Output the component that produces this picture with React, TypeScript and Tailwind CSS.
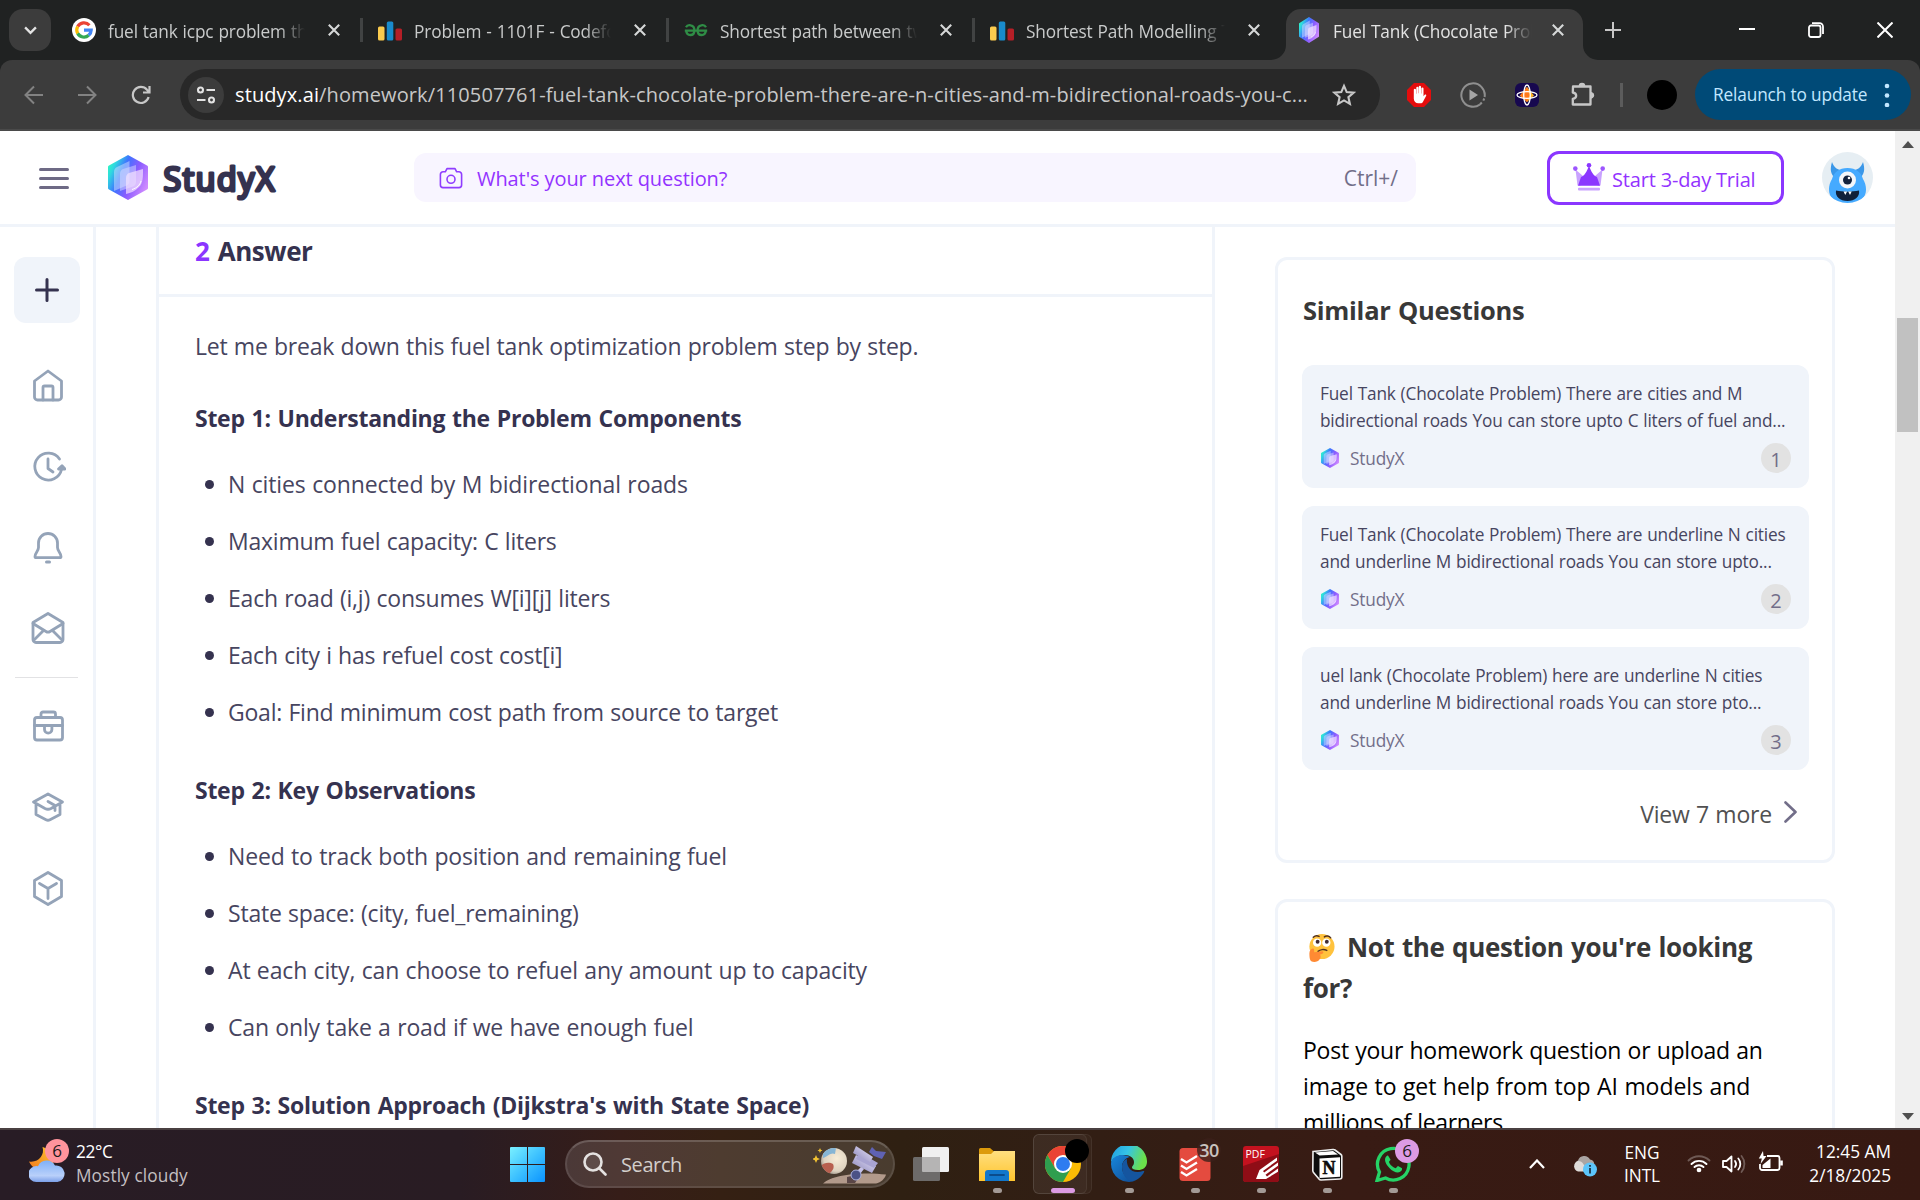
import type { ReactNode } from "react";

const G_RED = "#ea4335";

function GoogleIcon() {
  return (
    <svg viewBox="0 0 24 24" className="size-6 shrink-0">
      <circle cx="12" cy="12" r="12" fill="#fff" />
      <g fill="none" strokeWidth="3.2">
        <path d="M17.4 7.2A7.2 7.2 0 0 0 5.7 8.6" stroke={G_RED} />
        <path d="M5.7 8.5a7.2 7.2 0 0 0 0 7" stroke="#fbbc04" />
        <path d="M5.7 15.4a7.2 7.2 0 0 0 11 1.9" stroke="#34a853" />
        <path d="M12 12.1h7.2a7.2 7.2 0 0 1-2.5 5.2" stroke="#4285f4" />
      </g>
    </svg>
  );
}

function BarsIcon() {
  return (
    <svg viewBox="0 0 24 24" className="size-6 shrink-0">
      <rect x="0" y="8.5" width="6.5" height="14" rx="1.5" fill="#fbcb4e" />
      <rect x="8.8" y="3.5" width="6.5" height="19" rx="1.5" fill="#198bcc" />
      <rect x="17.5" y="10.5" width="6.5" height="12" rx="1.5" fill="#b51f27" />
    </svg>
  );
}

function GeeksIcon() {
  return (
    <svg viewBox="0 0 24 24" className="size-6 shrink-0" fill="none" stroke="#2f8d46" strokeWidth="2.3">
      <path d="M2 9.2C3 7.4 5 6.9 6.7 7.3c2.4.5 3.8 2.5 3.7 5.2M13.6 12.5c-.1-2.7 1.3-4.7 3.7-5.2 1.7-.4 3.7.1 4.7 1.9M.8 12.600h22.4M2.2 12.600c.2 2.700 1.900 4.400 4.200 4.400 2.300 0 3.900-1.700 4-4.400M13.600 12.600c.1 2.700 1.700 4.400 4 4.400 2.300 0 4-1.700 4.200-4.400" />
    </svg>
  );
}

function StudyXMark({ id, className }: { id: string; className: string }) {
  return (
    <svg viewBox="0 0 40 45" preserveAspectRatio="none" className={className}>
      <defs>
        <linearGradient id={id} x1="0" y1="0.25" x2="1" y2="0.75">
          <stop offset="0" stopColor="#2ff5c4" />
          <stop offset="0.12" stopColor="#2fd8e0" />
          <stop offset="0.34" stopColor="#3f74ff" />
          <stop offset="0.62" stopColor="#8b5cff" />
          <stop offset="1" stopColor="#d890ff" />
        </linearGradient>
      </defs>
      <path d="M20 0 39 10.500a2 2 0 0 1 1 2v20a2 2 0 0 1-1 2L20 45 1 34.500a2 2 0 0 1-1-2v-20a2 2 0 0 1 1-2Z" fill={`url(#${id})`} />
      <path d="M6 17c0-2.500 1-4 3-5L21.500 6v20c0 2-1 3.500-3 4.500L6 36Z" fill="#cfe6ff" opacity=".5" />
      <path d="M12 19c0-2.500 1-4 3-5l13-4v17c0 2-1 3.500-3 4.500L12 36Z" fill="#d9dcff" opacity=".5" />
      <path d="M18 23c0-2.500 1-4 3-5l14-4c0 8 0 14-4 18s-8 6-13 7Z" fill="#f3e2ff" opacity=".7" />
      <path d="M33 26c-1 4-4 7-9 8.500" fill="none" stroke="#fff" strokeWidth="1" opacity=".9" />
    </svg>
  );
}

function CloseX() {
  return (
    <svg viewBox="0 0 12 12" className="size-3 shrink-0" fill="none" stroke="#d6d8d8" strokeWidth="2.1">
      <path d="M.8.8l10.4 10.4M11.2.8.8 11.2" />
    </svg>
  );
}

function TabTitle({ children }: { children: string }) {
  return (
    <span className="ml-3 mt-[3px] w-[201px] overflow-hidden whitespace-nowrap text-[17.25px] leading-[24px] tracking-[-0.14px] [word-spacing:0.6px] [mask-image:linear-gradient(to_right,#000_86%,transparent_99%)]">
      {children}
    </span>
  );
}

const inactiveTabs = [
  { icon: <GoogleIcon />, title: "fuel tank icpc problem the" },
  { icon: <BarsIcon />, title: "Problem - 1101F - Codefor" },
  { icon: <GeeksIcon />, title: "Shortest path between tw" },
  { icon: <BarsIcon />, title: "Shortest Path Modelling T" },
];

function TabStrip() {
  return (
    <div className="flex h-[60px] bg-[#202222] pl-[9px] text-[#c9cbcb]">
      <div className="mt-[9px] flex size-[42px] items-center justify-center rounded-[14px] bg-[#3c3c3c]">
        <svg viewBox="0 0 14 10" className="h-[9px] w-[13px]" fill="none" stroke="#e3e3e3" strokeWidth="2.6">
          <path d="m1 1.500 6 6 6-6" />
        </svg>
      </div>
      <div className="ml-[6px] flex">
        {inactiveTabs.map((t, i) => (
          <div key={t.title} className="flex h-[60px] w-[306px] items-center pl-[15px]">
            {t.icon}
            <TabTitle>{t.title}</TabTitle>
            <span className="ml-[21px]">
              <CloseX />
            </span>
            <span className={i < 3 ? "ml-5 h-6 w-[3px] bg-[#414343]" : "hidden"} />
          </div>
        ))}
      </div>
      <div className="relative ml-[5px] mt-[9px] flex h-[51px] w-[297px] items-center rounded-t-[15px] bg-[#3c3c3c] pb-[9px] pl-[13px] text-[#e3e3e3]">
        <svg viewBox="0 0 15 15" className="absolute -left-[15px] bottom-0 size-[15px]">
          <path d="M15 0v15H0A15 15 0 0 0 15 0Z" fill="#3c3c3c" />
        </svg>
        <svg viewBox="0 0 15 15" className="absolute -right-[15px] bottom-0 size-[15px]">
          <path d="M0 0v15h15A15 15 0 0 1 0 0Z" fill="#3c3c3c" />
        </svg>
        <span className="w-[22px]">
          <StudyXMark id="tabmark" className="h-[26px] w-[20px]" />
        </span>
        <TabTitle>Fuel Tank (Chocolate Prob</TabTitle>
        <span className="ml-[18px]">
          <CloseX />
        </span>
      </div>
      <svg viewBox="0 0 16 16" className="ml-[22px] mt-[22px] size-4" fill="none" stroke="#c7c7c7" strokeWidth="2">
        <path d="M8 0v16M0 8h16" />
      </svg>
      <svg viewBox="0 0 16 16" className="ml-[118px] mt-[21px] size-4" stroke="#fff" strokeWidth="2">
        <path d="M0 8h16" />
      </svg>
      <svg viewBox="0 0 16 16" className="ml-[53px] mt-[22px] size-4" fill="none" stroke="#fff" strokeWidth="1.8">
        <rect x="1" y="3.500" width="11.500" height="11.500" rx="2" />
        <path d="M4 1.200h7.500a3.500 3.500 0 0 1 3.500 3.500V12" />
      </svg>
      <svg viewBox="0 0 16 16" className="ml-[53px] mt-[22px] size-4" stroke="#fff" strokeWidth="2">
        <path d="m.5.5 15 15M15.500.5l-15 15" />
      </svg>
    </div>
  );
}

function Toolbar() {
  return (
    <div className="bg-[#202222]">
      <div className="flex h-[71px] rounded-t-[12px] border-b-2 border-[#4a4a4a] bg-[#3c3c3c] pl-6 pt-[9px]">
        <div className="flex h-[51px] items-center">
          <svg viewBox="0 0 20 20" className="size-5" fill="none" stroke="#828282" strokeWidth="2">
            <path d="M19 10H2M10 1.500 1.500 10l8.500 8.500" />
          </svg>
          <svg viewBox="0 0 20 20" className="ml-[33px] size-5" fill="none" stroke="#828282" strokeWidth="2">
            <path d="M1 10h17M10 1.500l8.500 8.500-8.500 8.500" />
          </svg>
          <svg viewBox="0 0 20 20" className="ml-[34px] size-5" fill="none" stroke="#c7c7c7" strokeWidth="2.2">
            <path d="M17.600 12A8 8 0 1 1 16 4.800L18 7M18.500 1v6.500H12" />
          </svg>
        </div>
        <div className="ml-[29px] flex h-[51px] w-[1200px] items-center rounded-full bg-[#282828] pl-2">
          <div className="flex size-9 items-center justify-center rounded-full bg-[#3c3c3c]">
            <svg viewBox="0 0 20 20" className="size-5" fill="none" stroke="#e3e3e3" strokeWidth="2.1">
              <circle cx="4.500" cy="5" r="2.500" />
              <path d="M10.500 5H19M1 15h8.500" />
              <circle cx="15.500" cy="15" r="2.500" />
            </svg>
          </div>
          <span className="ml-[11px] w-[1085px] whitespace-nowrap text-[20px] tracking-[0.115px] text-[#c7c7c7]">
            <span className="text-white">studyx.ai</span>
            /homework/110507761-fuel-tank-chocolate-problem-there-are-n-cities-and-m-bidirectional-roads-you-c...
          </span>
          <svg viewBox="0 0 24 24" className="ml-3 size-6" fill="none" stroke="#c7c7c7" strokeWidth="2.1">
            <path d="m12 2.800 2.700 6.300 6.800.6-5.100 4.500 1.500 6.700-5.900-3.500-5.900 3.500 1.500-6.700-5.100-4.500 6.800-.6Z" />
          </svg>
        </div>
        <div className="ml-[27px] flex h-[51px] items-center">
          <svg viewBox="0 0 24 24" className="size-6">
            <path d="M7 0h10l7 7v10l-7 7H7l-7-7V7Z" fill="#e40d0d" />
            <path d="M6.800 12.500V6.800a1.100 1.100 0 0 1 2.200 0v4h.3V4.800a1.100 1.100 0 0 1 2.200 0v5.500h.3V3.800a1.100 1.100 0 0 1 2.200 0v6.700h.3V5.500a1.100 1.100 0 0 1 2.200 0v7.700l1.200-1.400c.8-.7 1.900 0 1.500.9l-3.200 6c-.5 1-1.400 1.600-2.500 1.600h-2.200c-2.500 0-4.500-2-4.500-4.500Z" fill="#fff" />
          </svg>
          <svg viewBox="0 0 26 26" className="ml-[29px] size-[26px]" fill="none" stroke="#8f8f8f" strokeWidth="2">
            <path d="M20 22.500A11.700 11.700 0 1 1 24.600 15" />
            <path d="m20 22.500 1.800-2M24.300 16.500l-1 2.200" />
            <path d="M9.500 7.500v11l8.500-5.500Z" fill="#a5a5a5" stroke="none" />
          </svg>
          <svg viewBox="0 0 24 24" className="ml-[29px] size-6">
            <rect width="24" height="24" rx="6" fill="#17084f" />
            <path d="m12 4 7 8.500L12 19l-7-6.500Z" fill="#ffb020" />
            <path d="m12 4 3 8-3 7-7-6.500Z" fill="#ff7a1a" />
            <g fill="none" stroke="#fff" strokeWidth="1.3">
              <ellipse cx="12" cy="12" rx="10" ry="3.300" />
              <ellipse cx="12" cy="12" rx="3.300" ry="10" />
            </g>
          </svg>
          <svg viewBox="0 0 26 26" className="ml-[31px] size-[26px]" fill="none" stroke="#c7c7c7" strokeWidth="2.3" strokeLinejoin="round">
            <path d="M3 4.500h17.500v18H2.800v-5.600c4.500-.8 4.500-5.600 0-6.400Z" />
            <path d="M9.300 4a2.700 2.700 0 0 1 5.400 0ZM21.500 10.500a2.900 2.900 0 0 1 0 5.600Z" fill="#c7c7c7" strokeWidth="1.2" />
          </svg>
          <span className="ml-[24px] h-6 w-[3px] bg-[#5c5c5c]" />
          <span className="ml-[24px] size-[30px] rounded-full bg-black" />
        </div>
        <div className="ml-[18px] flex h-[51px] w-[216px] items-center rounded-full bg-[#004a77] pl-[18px] text-[17.25px] tracking-[-0.14px] text-[#c2e7ff]">
          <span className="mt-px w-[171px] whitespace-nowrap">Relaunch to update</span>
          <svg viewBox="0 0 6 24" className="h-6 w-[6px]" fill="#c2e7ff">
            <circle cx="3" cy="3" r="2.300" />
            <circle cx="3" cy="12.500" r="2.300" />
            <circle cx="3" cy="22" r="2.300" />
          </svg>
        </div>
      </div>
    </div>
  );
}

function SiteHeader() {
  return (
    <header className="flex h-[96px] items-center border-b-[3px] border-[#f0f4fa] pl-[39px]">
      <div className="mt-px flex w-[30px] flex-col gap-[6px]">
        <span className="h-[3px] rounded bg-[#6e6a85]" />
        <span className="h-[3px] rounded bg-[#6e6a85]" />
        <span className="h-[3px] rounded bg-[#6e6a85]" />
      </div>
      <StudyXMark id="mainmark" className="ml-[39px] h-[45px] w-[40px]" />
      <svg viewBox="0 0 266 50" className="h-[50px] w-[266px]">
        <text
          x="15.500"
          y="37.500"
          fontSize="32"
          fontWeight="400"
          textLength="111"
          fill="#35324f"
          stroke="#35324f"
          strokeWidth="3.200"
          strokeLinejoin="round"
          strokeLinecap="round"
        >
          StudyX
        </text>
      </svg>
      <div className="flex h-[49px] w-[1002px] items-center rounded-[12px] bg-[#f8f5ff] pl-[25px] pr-[18px]">
        <svg viewBox="0 0 24 24" className="size-6" fill="none" stroke="#8f3dff" strokeWidth="1.6" strokeLinejoin="round">
          <path d="M8 2.600h8l1.700 3.200H20a2.600 2.600 0 0 1 2.600 2.600V19a2.600 2.600 0 0 1-2.600 2.600H4A2.600 2.600 0 0 1 1.400 19V8.400A2.600 2.600 0 0 1 4 5.800h2.300Z" />
          <circle cx="12" cy="13.300" r="4" />
        </svg>
        <span className="ml-[14px] mt-[3px] grow text-[20px] tracking-[-0.08px] text-[#9333ff]">What's your next question?</span>
        <span className="mt-[3px] text-[21px] text-[#726e89]">Ctrl+/</span>
      </div>
      <div className="ml-[131px] flex h-[54px] w-[237px] items-center rounded-[12px] border-[3px] border-[#8b36ff] pl-[23px]">
        <svg viewBox="0 0 32 28" className="-mt-px h-[28px] w-[32px]">
          <g fill="#c9a2ff">
            <path d="M2.500 6.500 10 13l-2.500 9.500h-3ZM29.500 6.500 22 13l2.500 9.500h3Z" />
            <rect x="5" y="24.800" width="22" height="2.700" rx="1" />
          </g>
          <path d="M16 2.500c2 6 5 11 8 11.500l3 8.800H5L8 14c3-.5 6-5.500 8-11.500Z" fill="#8b36ff" />
          <circle cx="16" cy="2.300" r="2.300" fill="#8b36ff" />
          <circle cx="2.300" cy="5.600" r="2.300" fill="#9d55ff" />
          <circle cx="29.700" cy="5.600" r="2.300" fill="#9d55ff" />
        </svg>
        <span className="ml-[7px] mt-1 whitespace-nowrap text-[20px] tracking-[-0.18px] text-[#9333ff]">Start 3-day Trial</span>
      </div>
      <svg viewBox="0 0 51 51" className="ml-[38px] size-[51px]">
        <defs>
          <clipPath id="avatarclip">
            <circle cx="25.500" cy="25.500" r="25.500" />
          </clipPath>
        </defs>
        <g clipPath="url(#avatarclip)">
          <rect width="51" height="51" fill="#e6eef3" />
          <path d="M10 10c-2 7-2 12 4 17l8-8c-6-1-10-3-12-9ZM41 10c2 7 2 12-4 17l-8-8c6-1 10-3 12-9Z" fill="#3a97e8" />
          <path d="M25.500 16C34 16 39 20 41 27c3 5 4 11 2 16-2 5-8 9-17.500 9S10 48 8 43c-2-5-1-11 2-16 2-7 7-11 15.500-11Z" fill="#45aaff" />
          <circle cx="25.500" cy="28" r="8.500" fill="#f4f7fa" />
          <circle cx="25.500" cy="28" r="4.500" fill="#13233f" />
          <circle cx="27" cy="26" r="1.300" fill="#fff" />
          <path d="M14 38.500c7 1.500 16 1.500 23 0 1 6-4 10.500-11.500 10.500S13 44.500 14 38.500Z" fill="#10203a" />
          <path d="m21.500 39.500 1.800 3.500 1.800-3.400ZM26.200 39.600 28 43l1.700-3.500Z" fill="#fff" />
        </g>
      </svg>
    </header>
  );
}

function SideIcon({ children }: { children: ReactNode }) {
  return (
    <svg viewBox="0 0 36 36" className="ml-[30px] size-9 shrink-0" fill="none" stroke="#94a3b8" strokeWidth="2.8" strokeLinecap="round" strokeLinejoin="round">
      {children}
    </svg>
  );
}

function Sidebar() {
  return (
    <nav className="flex w-[96px] shrink-0 flex-col border-r-[3px] border-[#f0f4fa] pt-[30px]">
      <div className="ml-[14px] flex size-[66px] shrink-0 items-center justify-center rounded-[12px] bg-[#f0f4fa]">
        <svg viewBox="0 0 24 24" className="size-6" stroke="#35324f" strokeWidth="3" strokeLinecap="round">
          <path d="M12 1.500v21M1.500 12h21" />
        </svg>
      </div>
      <div className="mt-[45px] flex flex-col gap-[45px]">
        <SideIcon>
          <path d="M18 3 4.500 13v16A3 3 0 0 0 7.500 32h21a3 3 0 0 0 3-3V13Z" />
          <path d="M13 32V19.500A1.500 1.500 0 0 1 14.500 18h7a1.500 1.500 0 0 1 1.500 1.500V32" />
        </SideIcon>
        <SideIcon>
          <path d="M29.500 10A13.500 13.500 0 1 0 31.500 20.500M18 10v9.500l5 3.500" />
          <path d="m28.500 20 3.500-3.300 3 3.300Z" fill="#94a3b8" />
        </SideIcon>
        <SideIcon>
          <path d="M18 3.500a9.500 9.500 0 0 0-9.500 9.500v4.500c0 3.500-3.500 5.500-3.500 9 0 .8.500 1.200 1.200 1.200h23.600c.7 0 1.200-.4 1.200-1.200 0-3.500-3.500-5.500-3.500-9V13A9.500 9.500 0 0 0 18 3.500Z" />
          <path d="M16.500 32h3" strokeWidth="3" />
        </SideIcon>
        <SideIcon>
          <path d="M18 2.500 3 11.500v17a3 3 0 0 0 3 3h24a3 3 0 0 0 3-3v-17Z" />
          <path d="m3 12.500 13 8c1.300.8 2.700.8 4 0l13-8M4 29l9-9M32 29l-9-9" />
        </SideIcon>
      </div>
      <div className="mb-[30px] ml-[15px] mt-[30px] h-px w-[63px] shrink-0 bg-[#e2e2e4]" />
      <div className="flex flex-col gap-[45px]">
        <SideIcon>
          <rect x="4.500" y="9.500" width="28" height="22.500" rx="2.500" />
          <path d="M11 9.500V6a2 2 0 0 1 2-2h10.500a2 2 0 0 1 2 2v3.500M4.500 17.500h28M14.500 17.500v4a3.700 3.700 0 0 0 7.400 0v-4" />
        </SideIcon>
        <SideIcon>
          <path d="M18 5 3.500 13l11.500 6.500c2 1 4 1 6 0L32.500 13ZM6 15v10.500l10 5.200c1.300.7 2.700.7 4 0L30 25.500V15.500M18 12.500l7 4v5" />
        </SideIcon>
        <SideIcon>
          <path d="M18 2.500 4.500 10.500v16l13.500 8 13.500-8v-16ZM9.500 13.500l8.500 5 8.500-5M18 18.500v10" />
        </SideIcon>
      </div>
    </nav>
  );
}

function StepTitle({ children }: { children: ReactNode }) {
  return (
    <h3 className="text-[23px] leading-[36px] font-bold tracking-[-0.28px] text-[#35324f] [word-spacing:1.2px]">{children}</h3>
  );
}

type Line = { text: string; fit: string };

function Bullets({ items }: { items: Line[] }) {
  return (
    <ul className="mt-[30px] flex flex-col gap-[21px]">
      {items.map(({ text, fit }) => (
        <li key={text} className="flex items-center pl-[10px]">
          <span className="mt-px size-[9px] rounded-full bg-[#35324f]" />
          <span className={`ml-[14px] text-[23px] leading-[36px] whitespace-nowrap ${fit}`}>{text}</span>
        </li>
      ))}
    </ul>
  );
}

const components: Line[] = [
  { text: "N cities connected by M bidirectional roads", fit: "tracking-[-0.11px]" },
  { text: "Maximum fuel capacity: C liters", fit: "tracking-[-0.23px]" },
  { text: "Each road (i,j) consumes W[i][j] liters", fit: "tracking-[-0.2px]" },
  { text: "Each city i has refuel cost cost[i]", fit: "tracking-[-0.22px]" },
  { text: "Goal: Find minimum cost path from source to target", fit: "tracking-[-0.22px]" },
];

const observations: Line[] = [
  { text: "Need to track both position and remaining fuel", fit: "tracking-[-0.15px]" },
  { text: "State space: (city, fuel_remaining)", fit: "tracking-[-0.2px]" },
  { text: "At each city, can choose to refuel any amount up to capacity", fit: "tracking-[-0.15px]" },
  { text: "Can only take a road if we have enough fuel", fit: "tracking-[-0.16px]" },
];

function Answer() {
  return (
    <article className="h-[901px] w-[1059px] shrink-0 overflow-hidden border-x-[3px] border-[#f0f4fa] text-[#474560] [word-spacing:0.6px]">
      <div className="h-[70px] border-b-[3px] border-[#f0f4fa] pl-9 pt-[6px] text-[26px] leading-[36px] font-bold tracking-[-0.45px] text-[#35324f] [word-spacing:2px]">
        <span className="text-[#8b36ff]">2</span> Answer
      </div>
      <div className="pl-9 pt-[31px]">
        <p className="mb-9 text-[23px] leading-[36px] tracking-[-0.21px]">
          Let me break down this fuel tank optimization problem step by step.
        </p>
        <StepTitle>Step 1: Understanding the Problem Components</StepTitle>
        <Bullets items={components} />
        <div className="h-[42px]" />
        <StepTitle>Step 2: Key Observations</StepTitle>
        <Bullets items={observations} />
        <div className="h-[42px]" />
        <StepTitle>Step 3: Solution Approach (Dijkstra's with State Space)</StepTitle>
      </div>
    </article>
  );
}

const similar = [
  ["Fuel Tank (Chocolate Problem) There are cities and M", "bidirectional roads You can store upto C liters of fuel and..."],
  ["Fuel Tank (Chocolate Problem) There are underline N cities", "and underline M bidirectional roads You can store upto..."],
  ["uel lank (Chocolate Problem) here are underline N cities", "and underline M bidirectional roads You can store pto..."],
];

function Aside() {
  return (
    <aside className="ml-[60px] flex w-[560px] shrink-0 flex-col gap-9 pt-[30px]">
      <section className="h-[606px] shrink-0 rounded-[12px] border-[3px] border-[#f0f4fa] pl-[25px] pr-[23px] pt-[30px]">
        <h2 className="text-[25.5px] leading-[40px] font-bold tracking-[-0.26px] text-[#383838] [word-spacing:1px]">Similar Questions</h2>
        <div className="-ml-px mt-[35px] flex flex-col gap-[18px]">
          {similar.map(([a, b], i) => (
            <div
              key={a}
              className="h-[123px] rounded-[12px] bg-[#f0f4fa] px-[18px] pt-[15px] text-[17.25px] leading-[27px] tracking-[-0.18px] text-[#474560] [word-spacing:0.6px]"
            >
              <p className="whitespace-nowrap">{a}</p>
              <p className="whitespace-nowrap">{b}</p>
              <div className="mt-[9px] flex h-[30px] items-center">
                <StudyXMark id={`card${i}`} className="ml-px h-[20px] w-[18px]" />
                <span className="ml-[11px] grow text-[#726e89]">StudyX</span>
                <span className="flex size-[30px] items-center justify-center rounded-full bg-[#e2e2e2] pt-[2px] text-[20px] text-[#726e89]">
                  {i + 1}
                </span>
              </div>
            </div>
          ))}
        </div>
        <div className="mt-[26px] flex h-9 items-center justify-end pr-3">
          <span className="text-[23px] tracking-[-0.2px] text-[#515151] [word-spacing:0.6px]">View 7 more</span>
          <svg viewBox="0 0 13 22" className="-mt-[5px] ml-3 h-[22px] w-[13px]" fill="none" stroke="#726e89" strokeWidth="2.6" strokeLinecap="round" strokeLinejoin="round">
            <path d="m1.500 1.500 10 9.500-10 9.500" />
          </svg>
        </div>
      </section>
      <section className="h-[300px] shrink-0 rounded-[12px] border-[3px] border-[#f0f4fa] px-[25px] pt-[25px]">
        <h2 className="text-[26px] leading-[40.5px] font-bold tracking-[-0.34px] text-[#383838] [word-spacing:1px]">
          <span className="flex">
            <svg viewBox="0 0 28 30" className="ml-1 mr-3 mt-[6px] h-[29px] w-[28px] shrink-0">
              <circle cx="15" cy="14" r="13" fill="#ffc23d" />
              <circle cx="10" cy="10" r="4.300" fill="#fff" />
              <circle cx="19.500" cy="10" r="4.300" fill="#fff" />
              <circle cx="10.500" cy="9" r="2" fill="#402a32" />
              <circle cx="20" cy="9" r="2" fill="#402a32" />
              <path d="M6 4.500C8 2.500 10 2.500 12 3.500M17.500 4c2-1.500 5-1 6.500 1M11 19c2-2 6-2.500 9-1" fill="none" stroke="#503020" strokeWidth="1.5" strokeLinecap="round" />
              <path d="M2 21c0-3 2-5 4-5 1 0 1 3 1 4l8-1c2 0 2 2 0 2.600l-2 .6c2 3-1 7.800-6 7.800-4 0-5-2-5-9Z" fill="#ff8a33" />
            </svg>
            <span className="whitespace-nowrap">Not the question you're looking</span>
          </span>
          for?
        </h2>
        <p className="mt-[24px] text-[23px] leading-[36px] whitespace-nowrap text-black [word-spacing:0.6px]">
          <span className="block tracking-[-0.24px]">Post your homework question or upload an</span>
          <span className="block tracking-[-0.06px]">image to get help from top AI models and</span>
          <span className="block tracking-[-0.33px]">millions of learners.</span>
        </p>
      </section>
    </aside>
  );
}

function Scrollbar() {
  return (
    <div className="flex w-[25px] shrink-0 flex-col items-center bg-[#f0f0f0] pt-[10px]">
      <svg viewBox="0 0 12 7" className="h-[7px] w-3" fill="#505050">
        <path d="M6 0l6 7H0Z" />
      </svg>
      <div className="mt-[170px] h-[114px] w-[21px] bg-[#c1c1c1]" />
      <svg viewBox="0 0 12 7" className="mt-[681px] h-[7px] w-3" fill="#505050">
        <path d="M6 7 0 0h12Z" />
      </svg>
    </div>
  );
}

function TaskItem({ children, running = true }: { children: ReactNode; running?: boolean }) {
  return (
    <div className="relative flex h-[70px] w-[66px] shrink-0 flex-col items-center pt-4">
      {children}
      {running && <span className="mt-[6px] h-[5px] w-[9px] rounded-full bg-[#a39a96]" />}
    </div>
  );
}

function Badge6({ className }: { className: string }) {
  return (
    <span className={`flex size-6 items-center justify-center rounded-full text-[17px] leading-[24px] text-[#1b1b1b] ${className}`}>6</span>
  );
}

function Taskbar() {
  return (
    <footer className="flex h-[72px] shrink-0 border-t-2 border-[#4a4041] bg-[linear-gradient(90deg,#281c25_0px,#291c23_460px,#361d18_620px,#352013_720px,#2f2012_900px,#321e14_1100px,#381b14_1350px,#371912_1920px)] text-white">
      <div className="relative ml-[29px] mt-[17px] h-[36px] w-[37px]">
        <svg viewBox="0 0 37 36" className="h-9 w-[37px]">
          <defs>
            <linearGradient id="wcloud" x1="0" y1="0" x2="0" y2="1">
              <stop offset="0" stopColor="#7fb0f7" />
              <stop offset=".7" stopColor="#b9d0fa" />
              <stop offset="1" stopColor="#7b9fe8" />
            </linearGradient>
            <linearGradient id="wmoon" x1="1" y1="0" x2="0" y2="1">
              <stop offset="0" stopColor="#ffc52e" />
              <stop offset="1" stopColor="#f0761b" />
            </linearGradient>
          </defs>
          <path d="M13.500 0c2.500 8-4 16-13.500 14.500 4 9 16 12 22 8 6-8 0-20-8.500-22.500Z" fill="url(#wmoon)" />
          <path d="M8 35a8 8 0 1 1 1-15.800A9.500 9.500 0 0 1 26 18.500 8.300 8.300 0 0 1 28.500 35Z" fill="url(#wcloud)" />
        </svg>
        <Badge6 className="absolute -top-[8px] left-[16px] bg-[#ff949c]" />
      </div>
      <div className="ml-[10px] mt-[10px] w-[434px] text-[17.25px] leading-[24px]">
        <div className="tracking-[-0.4px]">22°C</div>
        <div className="tracking-[0.1px] text-[#c3bfc1]">Mostly cloudy</div>
      </div>
      <svg viewBox="0 0 35 35" className="mt-[17px] size-[35px] shrink-0">
        <defs>
          <linearGradient id="win" x1="0" y1="0" x2="1" y2="1">
            <stop offset="0" stopColor="#7af0ff" />
            <stop offset=".5" stopColor="#3ec2ff" />
            <stop offset="1" stopColor="#0a93ff" />
          </linearGradient>
        </defs>
        <path d="M1 0h16v17H0V1a1 1 0 0 1 1-1ZM18 0h16a1 1 0 0 1 1 1v16H18ZM0 18h17v17H1a1 1 0 0 1-1-1ZM18 18h17v16a1 1 0 0 1-1 1H18Z" fill="url(#win)" />
      </svg>
      <div className="ml-5 mt-[10px] flex h-12 w-[330px] shrink-0 items-center rounded-full border-2 border-[#ffffff18] border-t-[#ffffff2c] bg-[#ffffff20] pl-4">
        <svg viewBox="0 0 24 24" className="size-6" fill="#ffffff18" stroke="#e4e1e0" strokeWidth="2.6" strokeLinecap="round">
          <circle cx="10" cy="10" r="8.500" />
          <path d="m16.500 16.500 6 6" />
        </svg>
        <span className="ml-[14px] mt-px w-[192px] text-[20px] tracking-[-0.4px] text-[#d3cecb]">Search</span>
        <svg viewBox="0 0 74 40" className="h-10 w-[74px]">
          <defs>
            <radialGradient id="planet" cx=".6" cy=".4" r=".7">
              <stop offset="0" stopColor="#f7ecd6" />
              <stop offset=".7" stopColor="#ded2bf" />
              <stop offset="1" stopColor="#8d857c" />
            </radialGradient>
            <clipPath id="pc">
              <circle cx="21" cy="17" r="13" />
            </clipPath>
            <linearGradient id="tube" x1="0" y1="1" x2="1" y2="0">
              <stop offset="0" stopColor="#8580b5" />
              <stop offset="1" stopColor="#eeeaff" />
            </linearGradient>
          </defs>
          <path d="m3 11 1.200 2.800L7 15l-2.800 1.200L3 19l-1.200-2.800L-1 15l2.800-1.200ZM7 4l.8 1.700L9.500 6.500l-1.700.8L7 9l-.8-1.700-1.700-.8 1.700-.8Z" fill="#f1c232" />
          <circle cx="21" cy="17" r="13" fill="url(#planet)" />
          <g clipPath="url(#pc)">
            <path d="M10 8c4-5 10-5 13-4l-1 6c-4-2-7 2-12 4Z" fill="#86b5d4" />
            <path d="M8 22c3-4 9-4 12-2 2 4-1 8-5 10Z" fill="#b8604f" />
          </g>
          <path d="M10 39.500c8-9 40-12 63-9-1 4-5 8-10 9Z" fill="#b29a8b" />
          <path d="M34 33 48 30l-6 9h-8Z" fill="#5b4747" />
          <path d="m56 8 3-5 4 4 10 1-4 7-8-3Z" fill="#5f62b4" />
          <path d="m43 11 20 11-4 7-20-10Z" fill="url(#tube)" />
          <path d="m46 8 19 11-4 5-18-9Z" fill="#a9a4d2" />
          <path d="m43 2 17 11-3 5-17-9Z" fill="url(#tube)" />
          <path d="m48 23 3 2-4 5-4-2Z" fill="#c7c2e8" />
          <circle cx="43" cy="31" r="5" fill="#4b5286" stroke="#aeb4e0" strokeWidth="1" />
        </svg>
      </div>
      <div className="ml-[3px] flex">
        <TaskItem running={false}>
          <svg viewBox="0 0 36 36" className="size-9">
            <rect x="9" y="1" width="27" height="25" rx="1.500" fill="#f0f0f0" />
            <rect x="0" y="11" width="27" height="24" rx="1.500" fill="#6d6b6a" />
            <path d="M9 11h18v15H10a1 1 0 0 1-1-1Z" fill="#b5b4b4" />
          </svg>
        </TaskItem>
        <TaskItem>
          <svg viewBox="0 0 36 36" className="size-9">
            <defs>
              <linearGradient id="fold" x1="0" y1="0" x2="0" y2="1">
                <stop offset="0" stopColor="#ffdf80" />
                <stop offset="1" stopColor="#ffc52e" />
              </linearGradient>
            </defs>
            <path d="M0 3.500A1.500 1.500 0 0 1 1.500 2H11l4 3.500h19.500A1.500 1.500 0 0 1 36 7v6H0Z" fill="#dc9a0b" />
            <path d="M0 8h12l3-3h21v30H0Z" fill="url(#fold)" />
            <path d="M6 35V27a3 3 0 0 1 3-3h18a3 3 0 0 1 3 3v8Z" fill="#1277cb" />
            <path d="M11 29h14" stroke="#0b4c8c" strokeWidth="1.8" strokeLinecap="round" />
          </svg>
        </TaskItem>
        <div className="relative flex h-[70px] w-[66px] shrink-0 flex-col items-center">
          <span className="absolute left-[3px] top-[4px] h-[60px] w-[59px] rounded-[6px] border border-[#ffffff10] bg-[#ffffff08]" />
          <span className="absolute left-[3px] top-[4px] h-[60px] w-[54px] rounded-[6px] border border-[#ffffff10] bg-[#ffffff08]" />
          <svg viewBox="0 0 36 36" className="relative mt-4 size-9">
            <circle cx="18" cy="18" r="18" fill="#fbbc05" />
            <path d="M2.410 9A18 18 0 0 1 33.590 9H18l-7.800 13.500Z" fill="#ea4335" />
            <path d="M2.410 9A18 18 0 0 0 18 36l7.800-13.500-15.600 0Z" fill="#2f9e4f" />
            <circle cx="18" cy="18" r="9" fill="#fff" />
            <circle cx="18" cy="18" r="7" fill="#2f7cf0" />
          </svg>
          <span className="absolute left-[35px] top-[9px] size-6 rounded-full bg-black" />
          <span className="relative mt-[6px] h-[5px] w-6 rounded-full bg-[#dc9be4]" />
        </div>
        <TaskItem>
          <svg viewBox="0 0 36 36" className="size-9">
            <defs>
              <linearGradient id="ed1" x1="0" y1="0" x2="1" y2=".3">
                <stop offset="0" stopColor="#1f9be0" />
                <stop offset=".5" stopColor="#35c4e6" />
                <stop offset="1" stopColor="#6be04a" />
              </linearGradient>
              <linearGradient id="ed2" x1="0" y1="0" x2="1" y2="1">
                <stop offset="0" stopColor="#1787dc" />
                <stop offset="1" stopColor="#114a92" />
              </linearGradient>
            </defs>
            <path d="M0 17A18 18 0 0 1 36 15c.3 6-4 9-9 9-4 0-6-1-6-2.500s2-2 2-5.500c0-4-4-7-9-7C7 9 1 12 0 17Z" fill="url(#ed1)" />
            <path d="M0 18c0-5 5-9 11-9 3 0 6 1 8 2-5 1-8 5-8 10 0 7 6 14 14 13.500A18 18 0 0 1 0 18Z" fill="url(#ed2)" />
            <path d="M11 21c0-4 2-7 5-8-1 8 5 16 16 12 1-.4 1.700.3 1 1.300C31 30 27 34.500 21 35.200 15 34 11 28 11 21Z" fill="#15559f" />
          </svg>
        </TaskItem>
        <TaskItem>
          <svg viewBox="0 0 36 36" className="size-9">
            <rect x="2.500" y="2" width="31" height="33" rx="3.500" fill="#e44b3f" />
            <path d="m4 13 5.500 3.500L20 10M4 19.500l5.500 3.500L20 16.500M4 26l5.500 3.500L20 23" fill="none" stroke="#fff" strokeWidth="2.3" />
          </svg>
          <span className="absolute left-[35px] top-[8px] flex size-6 items-center justify-center rounded-full bg-[#3b201acc] text-[18px] font-semibold tracking-[-0.5px] text-[#c9c2bf]">
            30
          </span>
        </TaskItem>
        <TaskItem>
          <svg viewBox="0 0 36 36" className="size-9">
            <rect width="36" height="36" rx="3" fill="#c4121f" />
            <path d="M0 20 36 8v25a3 3 0 0 1-3 3H3a3 3 0 0 1-3-3Z" fill="#8f0d16" />
            <text x="2.500" y="11.500" fontSize="10.500" fill="#fff" fontFamily="Open Sans">
              PDF
            </text>
            <path d="m13 33 3.500-9L34 11.500v3.200L20 25l1.200 1.500L35 16.500v3.200l-12.500 9L24 30.500l11-8v3.300l-12 7.200Z" fill="#fff" />
          </svg>
        </TaskItem>
        <TaskItem>
          <svg viewBox="0 0 36 36" className="size-9">
            <path d="M4 5.500 24 3.500a3 3 0 0 1 2 .5l6 4.500a2 2 0 0 1 .8 1.600V31a2 2 0 0 1-2 2L12 34a2.500 2.500 0 0 1-2-1L4.500 26.500a3 3 0 0 1-.7-2Z" fill="#0d0d0d" stroke="#eee" strokeWidth="1.6" />
            <path d="m6 6.500 18-1.500 5 3.500-18.500 1Z" fill="#fff" />
            <path d="M10.500 12.500 31 11.300v19.500l-20.500 1.300Z" fill="#fff" />
            <text x="13.500" y="28" fontSize="18" fontWeight="bold" fill="#0d0d0d" fontFamily="Liberation Serif" stroke="#0d0d0d" strokeWidth=".6">
              N
            </text>
          </svg>
        </TaskItem>
        <TaskItem>
          <svg viewBox="0 0 36 36" className="size-9" fill="none">
            <path d="M2 34.500 4.500 26A15.800 15.800 0 1 1 10.500 32Z" stroke="#25d366" strokeWidth="3.3" />
            <path d="M13 9.500c-1-.2-3 1.500-3 4.200C10 19 18 26.800 23 26.500c2.500-.2 4.500-2 4-4.200l-4-2.300c-1 .3-1.500 2-2.500 2.200-2.500-.7-5.700-3.700-6.500-6.200.2-1 1.500-1.500 1.500-2.500Z" fill="#25d366" />
          </svg>
          <Badge6 className="absolute left-[35px] top-[9px] bg-[#dc9be4]" />
        </TaskItem>
      </div>
      <svg viewBox="0 0 16 10" className="ml-[103px] mt-[29px] h-[10px] w-4 shrink-0" fill="none" stroke="#fff" strokeWidth="2.2">
        <path d="m1 9 7-7.500L15 9" />
      </svg>
      <svg viewBox="0 0 26 22" className="ml-[27px] mt-[25px] h-[22px] w-[26px] shrink-0">
        <path d="M6 15A5.500 5.500 0 0 1 6 5.500 6.500 6.500 0 0 1 18 4.500a5.500 5.500 0 0 1 1 10.500Z" fill="#aaa5a3" />
        <path d="M6 16.500A5.500 5.500 0 0 1 6 6c5 0 7 5 8 10.500Z" fill="#dedbd9" />
        <circle cx="18" cy="14.500" r="7" fill="#5cc5fb" />
        <path d="M18 13v5.500M18 10v1.700" stroke="#1d3345" strokeWidth="1.8" />
      </svg>
      <div className="ml-[22px] mt-[11px] w-[44px] shrink-0 text-center text-[17.25px] leading-[23px] tracking-[-0.1px]">
        <div>ENG</div>
        <div>INTL</div>
      </div>
      <svg viewBox="0 0 24 20" className="ml-[23px] mt-[23px] h-5 w-6 shrink-0" fill="none" stroke="#fff" strokeWidth="1.9" strokeLinecap="round">
        <path d="M1.500 7.500a15 15 0 0 1 21 0" stroke="#6f5a55" />
        <path d="M4.500 11a10.500 10.500 0 0 1 15 0M7.500 14a6.500 6.500 0 0 1 9 0" />
        <circle cx="12" cy="17" r="1.400" fill="#fff" />
      </svg>
      <svg viewBox="0 0 24 20" className="ml-[11px] mt-[24px] h-5 w-6 shrink-0" fill="none" stroke="#fff" strokeWidth="1.8" strokeLinecap="round" strokeLinejoin="round">
        <path d="M1 7v6h3.500l5 4.500v-15L4.500 7ZM13 7a5 5 0 0 1 0 6M16.300 4.500a8.500 8.500 0 0 1 0 11" />
        <path d="M19.500 2a12.500 12.500 0 0 1 0 16" stroke="#6f5a55" />
      </svg>
      <svg viewBox="0 0 26 24" className="ml-[12px] mt-[20px] h-6 w-[26px] shrink-0" fill="none" stroke="#fff" strokeWidth="1.8">
        <path d="M9 6h10.500a2 2 0 0 1 2 2v10a2 2 0 0 1-2 2H4a2 2 0 0 1-2-2v-4" />
        <path d="M23.500 10.500v5" strokeWidth="2.600" />
        <path d="M12.500 8.500V18H4.500v-3Z" fill="#fff" stroke="none" />
        <path d="M5 1 .8 8.500h3L2.500 14l6-8H5.500Z" fill="#fff" stroke="none" />
      </svg>
      <div className="mt-[10px] w-[107px] shrink-0 text-right text-[17.25px] leading-[24px]">
        <div>12:45 AM</div>
        <div>2/18/2025</div>
      </div>
    </footer>
  );
}

export default function App() {
  return (
    <div className="flex h-[1200px] w-[1920px] flex-col overflow-hidden bg-white font-['Open_Sans','Noto_Sans',sans-serif]">
      <TabStrip />
      <Toolbar />
      <div className="flex h-[997px] shrink-0 overflow-hidden">
        <div className="flex w-[1895px] shrink-0 flex-col overflow-hidden">
          <SiteHeader />
          <main className="flex h-[901px] overflow-hidden">
            <Sidebar />
            <div className="flex pl-[60px]">
              <Answer />
              <Aside />
            </div>
          </main>
        </div>
        <Scrollbar />
      </div>
      <Taskbar />
    </div>
  );
}
